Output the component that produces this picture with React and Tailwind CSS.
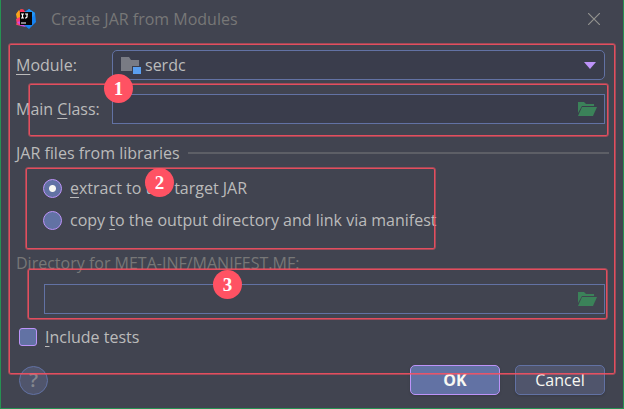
import React from "react";

function AppLogo() {
  return (
    <svg className="h-5 w-5 shrink-0" viewBox="0 0 20 20" aria-hidden="true">
      <path d="M1 4 5 0 10 3 6 14 0 16 2 11Z" fill="#f3702b" />
      <path d="M0 5 3 1 4 8 1 10Z" fill="#f8a51b" />
      <path d="M0 10 4 8 5 17 1 16Z" fill="#fb3c6e" />
      <path d="M1 13 5 12 10 18 5 17Z" fill="#c94be8" />
      <path d="M8 3 13 0 19 4 20 13 13 20 8 16Z" fill="#1683f2" />
      <path d="M13 0 19 4 17 8 9 4Z" fill="#2396f5" />
      <path d="M4 1 7 0 10 4 4 5Z" fill="#fb315f" />
      <rect x="4" y="3" width="12" height="13" fill="#080506" />
      <path d="M5 5h3M6.500 5v4M5 9h3M9 5h3M11 5v3l-1 1H9M5 14h5" fill="none" stroke="#fff" strokeWidth="1.200" />
    </svg>
  );
}

function FolderButton({ label }) {
  return (
    <button type="button" aria-label={label} className="mr-[7px] flex h-5 w-5 shrink-0 items-center justify-center">
      <svg className="h-5 w-5" viewBox="0 0 20 20" fill="#3b8259" aria-hidden="true">
        <path d="M1 3h6l2 2h8v2H5L1 14Z" />
        <path d="M5 8h15l-4 9H1Z" />
      </svg>
    </button>
  );
}

function Frame({ className }) {
  return (
    <div
      className={`pointer-events-none absolute rounded-[3px] border border-[#ff5060]/50 ring-1 ring-[#ff5060]/85 ring-inset ${className}`}
    />
  );
}

function Badge({ className, children }) {
  return (
    <div
      className={`pointer-events-none absolute flex h-[29px] w-[29px] items-center justify-center rounded-full bg-[#ff5263] font-['Liberation_Serif',serif] text-[19px] leading-5 font-bold text-white ${className}`}
    >
      {children}
    </div>
  );
}

const radioClass =
  "h-[19px] w-[19px] shrink-0 appearance-none rounded-full border border-[#bd93f9] bg-[#6272a4] checked:bg-[radial-gradient(circle,#f8f8f2_3px,#6272a4_4px)]";

export default function App() {
  return (
    <div className="relative flex min-h-screen flex-col border-x border-b border-[#269152] bg-[#414450] font-['Open_Sans','Noto_Sans',sans-serif] text-[16px] leading-5 text-[#bbbbbb]">
      <header className="flex h-[38px] items-center pr-[21px] pl-[15px]">
        <AppLogo />
        <h1 className="ml-[15px] flex-1 text-[#777777]">Create JAR from Modules</h1>
        <button type="button" aria-label="Close" className="flex h-4 w-4 items-center justify-center">
          <svg className="h-3 w-3" viewBox="0 0 12 12" stroke="#92928e" strokeWidth="1.200" aria-hidden="true">
            <path d="M0 0 12 12M12 0 0 12" />
          </svg>
        </button>
      </header>

      <main className="flex flex-col pt-3 pr-[18px] pl-[15px]">
        <div className="flex items-center">
          <label htmlFor="module" className="w-24 shrink-0 whitespace-nowrap">
            <span className="underline underline-offset-3">M</span>odule:
          </label>
          <div className="grid h-[30px] flex-1 items-center rounded-[5px] border border-[#6272a4] bg-[#3a3d4c]">
            <select
              id="module"
              className="col-start-1 row-start-1 h-7 w-full appearance-none bg-transparent pl-8 outline-none"
            >
              <option>serdc</option>
            </select>
            <svg className="pointer-events-none col-start-1 row-start-1 ml-2 h-5 w-5" viewBox="0 0 20 20" aria-hidden="true">
              <path d="M0 2h8l2 3h8v6h-7v5H0Z" fill="#797b84" />
              <rect x="12" y="12" width="8" height="7" fill="#5a9ff0" />
            </svg>
            <svg className="pointer-events-none col-start-1 row-start-1 mr-2 h-[7px] w-3 justify-self-end" viewBox="0 0 12 7" aria-hidden="true">
              <path d="M0 0h12L6 7Z" fill="#bd93f9" />
            </svg>
          </div>
        </div>

        <div className="mt-3.5 flex items-center">
          <label htmlFor="main-class" className="w-24 shrink-0 whitespace-nowrap">
            Main <span className="underline underline-offset-3">C</span>lass:
          </label>
          <div className="flex h-[30px] flex-1 items-center border border-[#6272a4] bg-[#3a3d4c]">
            <input id="main-class" type="text" className="h-7 min-w-0 flex-1 bg-transparent px-2 outline-none" />
            <FolderButton label="Browse main class" />
          </div>
        </div>

        <fieldset className="mt-[19px] -mr-1">
          <legend className="flex w-full items-center gap-2">
            JAR files from libraries
            <span className="h-0.5 flex-1 bg-[#5d5f66]" />
          </legend>
          <div className="mt-[15px] flex flex-col gap-3 pl-[27px]">
            <label className="flex h-5 items-center gap-2">
              <input type="radio" name="libraries" defaultChecked className={radioClass} />
              <span>
                <span className="underline underline-offset-3">e</span>xtract to the target JAR
              </span>
            </label>
            <label className="flex h-5 items-center gap-2">
              <input type="radio" name="libraries" className={radioClass} />
              <span>
                copy <span className="underline underline-offset-3">t</span>o the output directory and link via manifest
              </span>
            </label>
          </div>
        </fieldset>

        <label htmlFor="directory" className="mt-[23px] text-[#777777]">
          Directory for META-INF/MANIFEST.MF:
        </label>
        <div className="mt-[11px] ml-7 flex h-[30px] items-center border border-[#6272a4]">
          <input id="directory" type="text" disabled className="h-7 min-w-0 flex-1 bg-transparent px-2" />
          <FolderButton label="Browse directory" />
        </div>

        <label className="mt-[13px] ml-[3px] flex h-5 items-center gap-2">
          <input
            type="checkbox"
            className="h-[18px] w-[18px] shrink-0 appearance-none rounded-[3px] border border-[#bd93f9] bg-[#6272a4]"
          />
          <span>
            <span className="underline underline-offset-3">I</span>nclude tests
          </span>
        </label>
      </main>

      <footer className="mt-[18px] flex items-center pr-[18px] pl-[18px]">
        <button
          type="button"
          aria-label="Help"
          className="h-[29px] w-[29px] rounded-full border border-[#6272a4] bg-[#50556c] text-[20px] leading-6 font-semibold text-[#85878f]"
        >
          ?
        </button>
        <div className="ml-auto flex gap-[15px]">
          <button
            type="button"
            className="h-[30px] w-[90px] rounded-[5px] border border-[#bd93f9] bg-[#6272a4] font-bold text-[#f8f8f2] shadow-sm"
          >
            OK
          </button>
          <button
            type="button"
            className="h-[30px] w-[90px] rounded-[5px] border border-[#6272a4] bg-[#50556c] text-[#f8f8f2] shadow-sm"
          >
            Cancel
          </button>
        </div>
      </footer>

      <Frame className="top-[43px] right-[7px] left-[7px] h-[332px]" />
      <Frame className="top-[83px] right-[14px] left-[27px] h-[54px]" />
      <Frame className="top-[167px] left-[24px] h-[83px] w-[411px]" />
      <Frame className="top-[268px] right-[15px] left-[26px] h-[52px]" />
      <Badge className="top-[74px] left-[103px]">1</Badge>
      <Badge className="top-[168px] left-[144px]">2</Badge>
      <Badge className="top-[270px] left-[212px]">3</Badge>
    </div>
  );
}
